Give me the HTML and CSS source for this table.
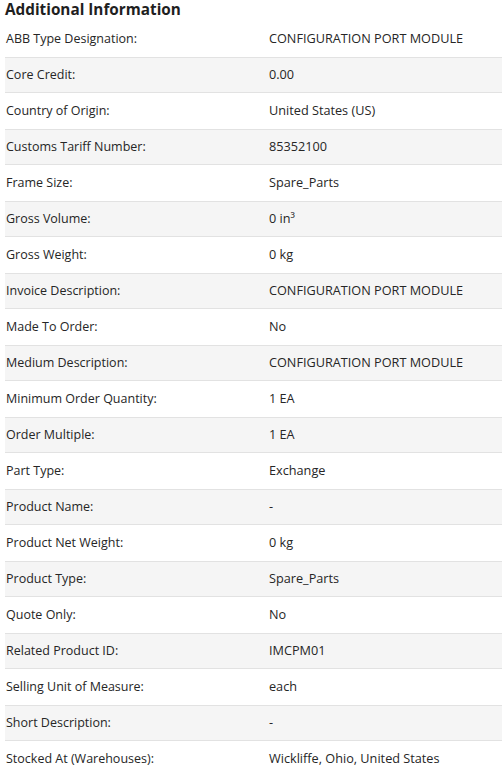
FILE: index.html
```html
<!DOCTYPE html>
<html lang="en">
<head>
<meta charset="utf-8">
<link rel="stylesheet" href="styles.css">
</head>
<body>
<section class="info">
  <h2 class="info-title">Additional Information</h2>
  <div class="info-list">
    <div class="row"><span class="label">ABB Type Designation:</span><span class="value">CONFIGURATION PORT MODULE</span></div>
    <div class="row alt"><span class="label">Core Credit:</span><span class="value">0.00</span></div>
    <div class="row"><span class="label">Country of Origin:</span><span class="value">United States (US)</span></div>
    <div class="row alt"><span class="label">Customs Tariff Number:</span><span class="value">85352100</span></div>
    <div class="row"><span class="label">Frame Size:</span><span class="value">Spare_Parts</span></div>
    <div class="row alt"><span class="label">Gross Volume:</span><span class="value">0 in³</span></div>
    <div class="row"><span class="label">Gross Weight:</span><span class="value">0 kg</span></div>
    <div class="row alt"><span class="label">Invoice Description:</span><span class="value">CONFIGURATION PORT MODULE</span></div>
    <div class="row"><span class="label">Made To Order:</span><span class="value">No</span></div>
    <div class="row alt"><span class="label">Medium Description:</span><span class="value">CONFIGURATION PORT MODULE</span></div>
    <div class="row"><span class="label">Minimum Order Quantity:</span><span class="value">1 EA</span></div>
    <div class="row alt"><span class="label">Order Multiple:</span><span class="value">1 EA</span></div>
    <div class="row"><span class="label">Part Type:</span><span class="value">Exchange</span></div>
    <div class="row alt"><span class="label">Product Name:</span><span class="value">-</span></div>
    <div class="row"><span class="label">Product Net Weight:</span><span class="value">0 kg</span></div>
    <div class="row alt"><span class="label">Product Type:</span><span class="value">Spare_Parts</span></div>
    <div class="row"><span class="label">Quote Only:</span><span class="value">No</span></div>
    <div class="row alt"><span class="label">Related Product ID:</span><span class="value">IMCPM01</span></div>
    <div class="row"><span class="label">Selling Unit of Measure:</span><span class="value">each</span></div>
    <div class="row alt"><span class="label">Short Description:</span><span class="value">-</span></div>
    <div class="row"><span class="label">Stocked At (Warehouses):</span><span class="value">Wickliffe, Ohio, United States</span></div>
  </div>
</section>
</body>
</html>
```

FILE: styles.css
```css
html, body {
  margin: 0;
  padding: 0;
  background: #fff;
}
body {
  font-family: "Open Sans", "Noto Sans", sans-serif;
  color: #262626;
}
.info {
  padding-left: 5px;
}
.info-title {
  margin: 0;
  height: 21px;
  line-height: 18px;
  font-size: 15.3px;
  font-weight: 700;
  color: #1f1f1f;
}
.info-list {
  display: flex;
  flex-direction: column;
}
.row {
  display: grid;
  grid-template-columns: 264px 1fr;
  height: 36px;
  padding-bottom: 2px;
  align-items: center;
  font-size: 12.7px;
  box-sizing: border-box;
}
.row.alt {
  background: #f5f5f5;
  border-top: 1px solid #e2e2e2;
  border-bottom: 1px solid #e2e2e2;
}
.label {
  padding-left: 1px;
  font-size: 12.5px;
}
```
